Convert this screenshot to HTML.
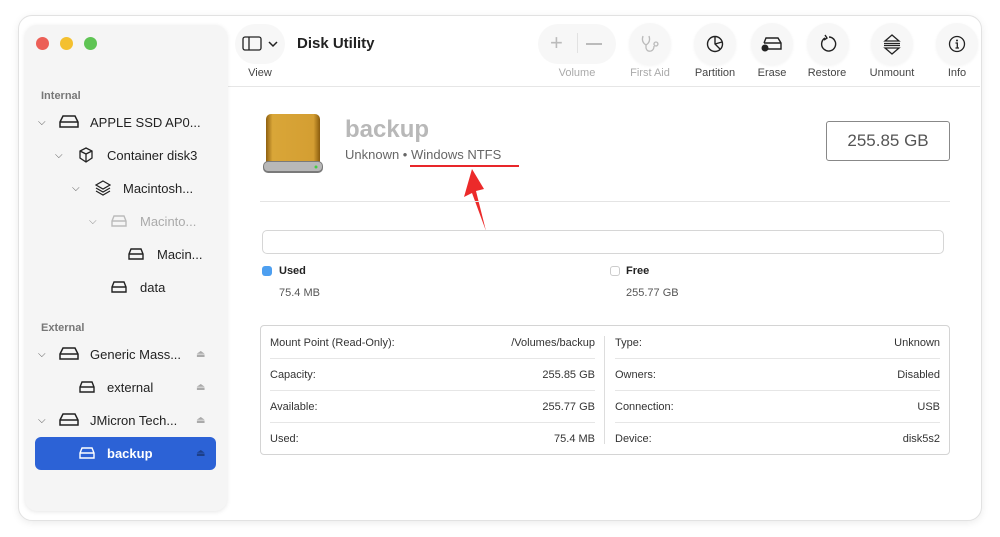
<!DOCTYPE html>
<html><head><meta charset="utf-8"><style>
*{margin:0;padding:0;box-sizing:border-box}
body{width:1000px;height:537px;background:#fff;font-family:"Liberation Sans",sans-serif;position:relative;overflow:hidden;color:#222}
.a{position:absolute}
.win{left:18px;top:15px;width:964px;height:506px;border:1px solid #e2e2e2;border-radius:14px;background:#fff;box-shadow:0 2px 8px rgba(0,0,0,.08)}
.side{left:25px;top:25px;width:202px;height:486px;background:#f5f5f5;border-radius:12px;box-shadow:0 1px 5px rgba(0,0,0,.1)}
.dot{width:13px;height:13px;border-radius:50%;top:37px}
.sec{font-size:11px;color:#777;font-weight:bold}
.it{font-size:13px;color:#222;white-space:nowrap}
.chev{font-size:10px;color:#555}
.btn{width:42px;height:42px;border-radius:50%;background:#f7f7f7;top:23px;box-shadow:0 1px 3px rgba(0,0,0,.05)}
.lbl{font-size:11px;color:#444;top:67px;text-align:center;width:70px}
.dim{color:#aaa}
.row{font-size:11px;color:#333;height:32px;line-height:32px}
.ej{font-size:10px;color:#aaa}
</style></head><body>
<div class="a win"></div>
<div class="a" style="left:228px;top:86px;width:752px;height:1px;background:#e6e6e6"></div>
<div class="a side"></div>
<div class="a dot" style="left:36px;background:#ec5f57"></div>
<div class="a dot" style="left:60px;background:#f4c02f"></div>
<div class="a dot" style="left:84px;background:#5fc454"></div>

<div class="a sec" style="left:41px;top:90px">Internal</div>
<div class="a chev" style="left:38px;top:117px">⌵</div>
<svg class="a" style="left:58px;top:114px" width="22" height="16" viewBox="0 0 22 16"><path d="M2 8 L5 2 H17 L20 8 V13 H2 Z M2 8 H20" fill="none" stroke="#222" stroke-width="1.5"/></svg>
<div class="a it" style="left:90px;top:115px">APPLE SSD AP0...</div>
<div class="a chev" style="left:55px;top:150px">⌵</div>
<svg class="a" style="left:78px;top:147px" width="16" height="16" viewBox="0 0 16 16"><path d="M8 1 L14 4 V11 L8 15 L2 11 V4 Z M2 4 L8 7 L14 4 M8 7 V15" fill="none" stroke="#222" stroke-width="1.3"/></svg>
<div class="a it" style="left:107px;top:148px">Container disk3</div>
<div class="a chev" style="left:72px;top:183px">⌵</div>
<svg class="a" style="left:95px;top:180px" width="16" height="16" viewBox="0 0 16 16"><path d="M8 1 L15 5 L8 9 L1 5 Z M1 8 L8 12 L15 8 M1 11 L8 15 L15 11" fill="none" stroke="#222" stroke-width="1.2"/></svg>
<div class="a it" style="left:123px;top:181px">Macintosh...</div>
<div class="a chev" style="left:89px;top:216px;color:#888">⌵</div>
<svg class="a" style="left:110px;top:214px" width="18" height="14" viewBox="0 0 18 14"><path d="M2 7 L4 2 H14 L16 7 V12 H2 Z M2 7 H16" fill="none" stroke="#bbb" stroke-width="1.4"/></svg>
<div class="a it" style="left:140px;top:214px;color:#aaa">Macinto...</div>
<svg class="a" style="left:127px;top:247px" width="18" height="14" viewBox="0 0 18 14"><path d="M2 7 L4 2 H14 L16 7 V12 H2 Z M2 7 H16" fill="none" stroke="#222" stroke-width="1.4"/></svg>
<div class="a it" style="left:157px;top:247px">Macin...</div>
<svg class="a" style="left:110px;top:280px" width="18" height="14" viewBox="0 0 18 14"><path d="M2 7 L4 2 H14 L16 7 V12 H2 Z M2 7 H16" fill="none" stroke="#222" stroke-width="1.4"/></svg>
<div class="a it" style="left:140px;top:280px">data</div>

<div class="a sec" style="left:41px;top:322px">External</div>
<div class="a chev" style="left:38px;top:349px">⌵</div>
<svg class="a" style="left:58px;top:346px" width="22" height="16" viewBox="0 0 22 16"><path d="M2 8 L5 2 H17 L20 8 V13 H2 Z M2 8 H20" fill="none" stroke="#222" stroke-width="1.5"/></svg>
<div class="a it" style="left:90px;top:347px">Generic Mass...</div>
<div class="a ej" style="left:196px;top:349px">⏏</div>
<svg class="a" style="left:78px;top:380px" width="18" height="14" viewBox="0 0 18 14"><path d="M2 7 L4 2 H14 L16 7 V12 H2 Z M2 7 H16" fill="none" stroke="#222" stroke-width="1.4"/></svg>
<div class="a it" style="left:107px;top:380px">external</div>
<div class="a ej" style="left:196px;top:382px">⏏</div>
<div class="a chev" style="left:38px;top:415px">⌵</div>
<svg class="a" style="left:58px;top:412px" width="22" height="16" viewBox="0 0 22 16"><path d="M2 8 L5 2 H17 L20 8 V13 H2 Z M2 8 H20" fill="none" stroke="#222" stroke-width="1.5"/></svg>
<div class="a it" style="left:90px;top:413px">JMicron Tech...</div>
<div class="a ej" style="left:196px;top:415px">⏏</div>
<div class="a" style="left:35px;top:437px;width:181px;height:33px;background:#2c62d6;border-radius:6px"></div>
<svg class="a" style="left:78px;top:446px" width="18" height="14" viewBox="0 0 18 14"><path d="M2 7 L4 2 H14 L16 7 V12 H2 Z M2 7 H16" fill="none" stroke="#fff" stroke-width="1.4"/></svg>
<div class="a it" style="left:107px;top:446px;color:#fff;font-weight:bold">backup</div>
<div class="a ej" style="left:196px;top:448px;color:#1d3f88">⏏</div>

<!-- toolbar -->
<div class="a" style="left:235px;top:24px;width:50px;height:40px;border-radius:20px;background:#f7f7f7"></div>
<svg class="a" style="left:242px;top:36px" width="40" height="16" viewBox="0 0 40 16"><rect x="1" y="1" width="18" height="13" rx="2" fill="none" stroke="#222" stroke-width="1.3"/><path d="M7 1 V14" stroke="#222" stroke-width="1.3"/><path d="M27 6 L31 10 L35 6" fill="none" stroke="#222" stroke-width="1.5"/></svg>
<div class="a lbl" style="left:225px">View</div>
<div class="a" style="left:297px;top:35px;font-size:15px;font-weight:bold;color:#222">Disk Utility</div>

<div class="a" style="left:538px;top:24px;width:78px;height:40px;border-radius:20px;background:#f7f7f7"></div>
<div class="a" style="left:550px;top:30px;font-size:22px;color:#bbb;font-weight:300">+</div>
<div class="a" style="left:577px;top:33px;width:1px;height:20px;background:#e2e2e2"></div>
<div class="a" style="left:586px;top:43px;width:16px;height:1.5px;background:#bbb"></div>
<div class="a lbl dim" style="left:542px">Volume</div>
<div class="a btn" style="left:629px"></div>
<svg class="a" style="left:640px;top:34px" width="22" height="20" viewBox="0 0 22 20"><path d="M3 2 Q1 8 6 11 Q11 8 9 2 M6 11 V14 Q7 18 11 17 Q14 16 14 12 M16 12 a2 2 0 1 0 -.1 0" fill="none" stroke="#bbb" stroke-width="1.3"/></svg>
<div class="a lbl dim" style="left:615px">First Aid</div>
<div class="a btn" style="left:694px"></div>
<svg class="a" style="left:706px;top:35px" width="18" height="18" viewBox="0 0 18 18"><circle cx="9" cy="9" r="7.5" fill="none" stroke="#222" stroke-width="1.4"/><path d="M9 1.5 V9 L14 14 M9 9 L16 7" fill="none" stroke="#222" stroke-width="1.4"/></svg>
<div class="a lbl" style="left:680px">Partition</div>
<div class="a btn" style="left:751px"></div>
<svg class="a" style="left:760px;top:35px" width="24" height="18" viewBox="0 0 24 18"><path d="M4 8 L6 3 H18 L21 8 V14 H8 M4 8 H21" fill="none" stroke="#222" stroke-width="1.4"/><circle cx="5" cy="13" r="3.5" fill="#222"/></svg>
<div class="a lbl" style="left:737px">Erase</div>
<div class="a btn" style="left:807px"></div>
<svg class="a" style="left:819px;top:34px" width="18" height="20" viewBox="0 0 18 20"><path d="M6 4 A7 7 0 1 0 10 3 M6 1 L8 4 L5 6" fill="none" stroke="#222" stroke-width="1.4"/></svg>
<div class="a lbl" style="left:792px">Restore</div>
<div class="a btn" style="left:871px"></div>
<svg class="a" style="left:883px;top:33px" width="18" height="22" viewBox="0 0 18 22"><path d="M2 8 L9 2 L16 8 Z M1 10.5 H17 M1 12.5 H17 M2 15 L9 21 L16 15 Z" fill="none" stroke="#222" stroke-width="1.3"/></svg>
<div class="a lbl" style="left:857px">Unmount</div>
<div class="a btn" style="left:936px"></div>
<svg class="a" style="left:948px;top:35px" width="18" height="18" viewBox="0 0 18 18"><circle cx="9" cy="9" r="7.5" fill="none" stroke="#222" stroke-width="1.3"/><circle cx="9" cy="5.5" r="1" fill="#222"/><path d="M7.5 8 H9.3 V13 M7.5 13 H11" fill="none" stroke="#222" stroke-width="1.3"/></svg>
<div class="a lbl" style="left:922px">Info</div>

<!-- header -->
<svg class="a" style="left:262px;top:112px" width="62" height="64" viewBox="0 0 62 64"><defs><linearGradient id="g" x1="0" x2="1"><stop offset="0" stop-color="#8f6010"/><stop offset=".12" stop-color="#d9a638"/><stop offset=".88" stop-color="#d49e32"/><stop offset="1" stop-color="#8a5c0e"/></linearGradient></defs><rect x="4" y="2" width="54" height="56" rx="5" fill="url(#g)"/><rect x="1" y="49" width="60" height="12" rx="5" fill="#7a7a7a"/><rect x="2" y="50" width="58" height="9" rx="4" fill="#b8b8b8"/><circle cx="54" cy="55" r="1.5" fill="#4c4"/></svg>
<div class="a" style="left:345px;top:116px;font-size:24px;font-weight:bold;color:#b8b8b8">backup</div>
<div class="a" style="left:345px;top:147px;font-size:13px;color:#666">Unknown • Windows NTFS</div>
<div class="a" style="left:410px;top:165px;width:109px;height:2px;background:#e8262a"></div>
<svg class="a" style="left:462px;top:167px" width="28" height="66" viewBox="0 0 28 66"><path d="M10 2 L2 30 L10 26 L24 64 L14 24 L22 22 Z" fill="#ec2a2a"/></svg>
<div class="a" style="left:826px;top:121px;width:124px;height:40px;border:1px solid #888;border-radius:3px;font-size:17px;color:#555;text-align:center;line-height:38px">255.85 GB</div>
<div class="a" style="left:260px;top:201px;width:690px;height:1px;background:#e4e4e4"></div>

<div class="a" style="left:262px;top:230px;width:682px;height:24px;border:1px solid #d6d6d6;border-radius:5px"></div>
<div class="a" style="left:262px;top:266px;width:10px;height:10px;border-radius:3px;background:#4d9ff0"></div>
<div class="a" style="left:279px;top:265px;font-size:11px;font-weight:bold">Used</div>
<div class="a" style="left:279px;top:287px;font-size:11px;color:#555">75.4 MB</div>
<div class="a" style="left:610px;top:266px;width:10px;height:10px;border-radius:3px;border:1px solid #ccc"></div>
<div class="a" style="left:626px;top:265px;font-size:11px;font-weight:bold">Free</div>
<div class="a" style="left:626px;top:287px;font-size:11px;color:#555">255.77 GB</div>

<div class="a" style="left:260px;top:325px;width:690px;height:130px;border:1px solid #d4d4d4;border-radius:4px"></div>
<div class="a" style="left:604px;top:336px;width:1px;height:108px;background:#ddd"></div>
<div class="a" style="left:270px;top:358px;width:325px;height:1px;background:#e6e6e6"></div>
<div class="a" style="left:270px;top:390px;width:325px;height:1px;background:#e6e6e6"></div>
<div class="a" style="left:270px;top:422px;width:325px;height:1px;background:#e6e6e6"></div>
<div class="a" style="left:615px;top:358px;width:325px;height:1px;background:#e6e6e6"></div>
<div class="a" style="left:615px;top:390px;width:325px;height:1px;background:#e6e6e6"></div>
<div class="a" style="left:615px;top:422px;width:325px;height:1px;background:#e6e6e6"></div>
<div class="a" style="left:270px;top:327px;width:325px">
<div class="row" style="display:flex;justify-content:space-between"><span>Mount Point (Read-Only):</span><span>/Volumes/backup</span></div>
<div class="row" style="display:flex;justify-content:space-between"><span>Capacity:</span><span>255.85 GB</span></div>
<div class="row" style="display:flex;justify-content:space-between"><span>Available:</span><span>255.77 GB</span></div>
<div class="row" style="display:flex;justify-content:space-between"><span>Used:</span><span>75.4 MB</span></div>
</div>
<div class="a" style="left:615px;top:327px;width:325px">
<div class="row" style="display:flex;justify-content:space-between"><span>Type:</span><span>Unknown</span></div>
<div class="row" style="display:flex;justify-content:space-between"><span>Owners:</span><span>Disabled</span></div>
<div class="row" style="display:flex;justify-content:space-between"><span>Connection:</span><span>USB</span></div>
<div class="row" style="display:flex;justify-content:space-between"><span>Device:</span><span>disk5s2</span></div>
</div>
</body></html>
